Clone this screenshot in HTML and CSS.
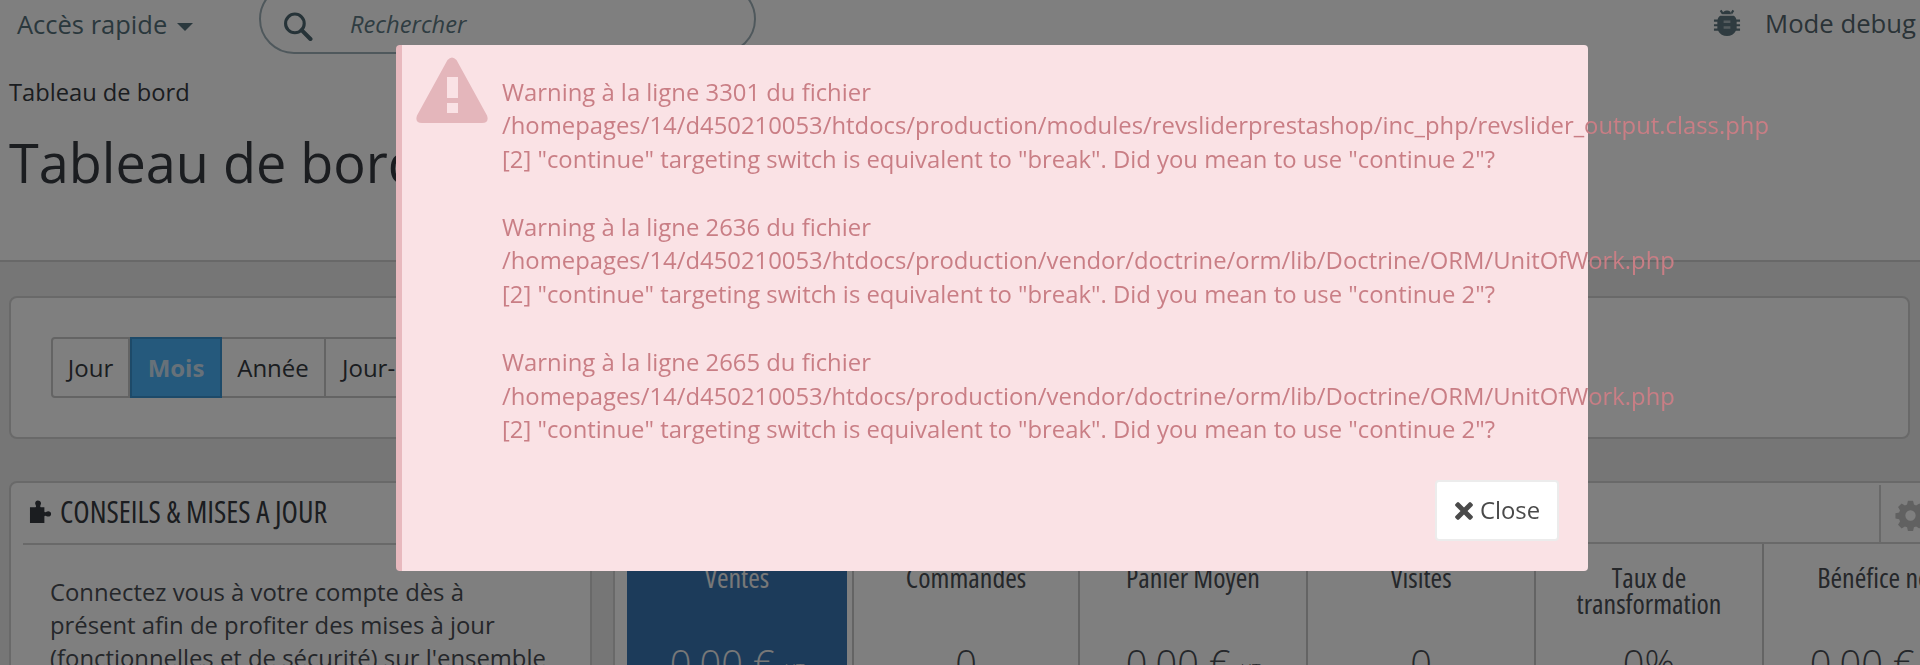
FILE: index.html
```html
<!DOCTYPE html>
<html lang="fr">
<head>
<meta charset="utf-8">
<title>Tableau de bord</title>
<link rel="stylesheet" href="styles.css">
</head>
<body>
<div class="page">
  <header class="head">
    <div class="topbar">
      <a class="quick">Accès rapide <span class="caret"></span></a>
      <div class="search">
        <svg class="search-ico" viewBox="0 0 28 28"><circle cx="11" cy="11" r="9" fill="none" stroke="currentColor" stroke-width="3"/><path d="M17.5 17.5L26 26" stroke="currentColor" stroke-width="4" stroke-linecap="round"/></svg>
        <span class="search-text">Rechercher</span>
      </div>
      <div class="debug">
        <svg class="bug" viewBox="0 0 28 30"><path fill="currentColor" d="M9 6.5C9.5 3.8 11.5 2.5 14 2.5s4.500 1.300 5 4zM6.500 3l1.800-1.200 2.200 3.500-1.800 1.200zM21.500 3l-1.800-1.200-2.200 3.500 1.800 1.200zM7 8h14c1.600 1 2.400 2.500 2.700 4H27.500v2.200H24v2.600h3.500V19H24v2.300h3.500v2.200H23.200C21.500 27 18 29 14 29S6.500 27 4.800 23.500H.5v-2.200H4V19H.5v-2.200H4v-2.600H.5V12h3.800C4.600 10.500 5.400 9 7 8z"/><path fill="#a9b7bc" d="M10.500 13h7v2.500h-7zM10.500 19h7v2.500h-7z"/></svg>
        <span>Mode debug</span>
      </div>
    </div>
    <div class="crumb">Tableau de bord</div>
    <h1 class="title">Tableau de bord</h1>
  </header>
  <main class="content">
    <section class="card range">
      <div class="btn-group">
        <span class="seg seg-jour">Jour</span>
        <span class="seg seg-on">Mois</span>
        <span class="seg seg-annee">Année</span>
        <span class="seg seg-j1">Jour-1</span>
      </div>
    </section>
    <div class="columns">
      <section class="card tips">
        <h2 class="tips-head">
          <svg class="puzzle" viewBox="0 0 26 26"><path fill="currentColor" d="M9 1.500c2.200 0 3.500 1.300 3.500 3 0 1.200-.8 2-.8 3 0 .6.300 1 1 1h3.300v4.200c0 .7.500 1 1 1 1 0 1.600-.9 2.900-.9 1.800 0 3.100 1.100 3.100 2.700s-1.300 2.800-3.100 2.800c-1.300 0-1.900-.9-2.900-.9-.5 0-1 .3-1 1V25H1V8.500h5.300c.7 0 1-.4 1-1 0-1-.9-1.800-.9-3 0-1.700 1.300-3 2.600-3z"/></svg>
          CONSEILS &amp; MISES A JOUR
        </h2>
        <p class="tips-text">Connectez vous à votre compte dès à présent afin de profiter des mises à jour (fonctionnelles et de sécurité) sur l'ensemble</p>
      </section>
      <section class="card stats">
        <div class="stats-bar">
          <div class="gear-cell">
            <svg class="gear" viewBox="-2 -2 36 36"><path fill="currentColor" fill-rule="evenodd" d="M13 -1h6l1 4.300 2.500 1 3.800-2.300 4.200 4.200-2.300 3.800 1 2.500 4.300 1v6l-4.300 1-1 2.500 2.300 3.800-4.200 4.200-3.800-2.300-2.500 1-1 4.300h-6l-1-4.300-2.500-1-3.800 2.300-4.200-4.200 2.300-3.800-1-2.500-4.300-1v-6l4.300-1 1-2.500-2.300-3.800 4.200-4.200 3.800 2.300 2.500-1zM16 10a6 6 0 1 0 0 12 6 6 0 0 0 0-12z"/></svg>
          </div>
        </div>
        <div class="kpis">
          <div class="kpi kpi-on"><div class="kpi-name">Ventes</div><div class="kpi-val">0,00 € <small>HT</small></div></div>
          <div class="kpi"><div class="kpi-name">Commandes</div><div class="kpi-val">0</div></div>
          <div class="kpi"><div class="kpi-name">Panier Moyen</div><div class="kpi-val">0,00 € <small>HT</small></div></div>
          <div class="kpi"><div class="kpi-name">Visites</div><div class="kpi-val">0</div></div>
          <div class="kpi"><div class="kpi-name">Taux de<br>transformation</div><div class="kpi-val">0%</div></div>
          <div class="kpi"><div class="kpi-name">Bénéfice net</div><div class="kpi-val">0,00 € <small>HT</small></div></div>
        </div>
      </section>
    </div>
  </main>
</div>
<div class="overlay"></div>
<div class="modal" role="dialog">
  <svg class="warn" viewBox="0 0 72 66"><path fill="#e4b6bb" fill-rule="evenodd" d="M31.500 3Q36 -2 40.500 3L71 58.500Q73.500 66 66 66H6Q-1.500 66 1 58.500zM31 20v21h11V20zM31 46v10h11V46z"/></svg>
  <div class="msgs">
    <p class="msg">Warning à la ligne 3301 du fichier<br>/homepages/14/d450210053/htdocs/production/modules/revsliderprestashop/inc_php/revslider_output.class.php<br>[2] "continue" targeting switch is equivalent to "break". Did you mean to use "continue 2"?</p>
    <p class="msg">Warning à la ligne 2636 du fichier<br>/homepages/14/d450210053/htdocs/production/vendor/doctrine/orm/lib/Doctrine/ORM/UnitOfWork.php<br>[2] "continue" targeting switch is equivalent to "break". Did you mean to use "continue 2"?</p>
    <p class="msg">Warning à la ligne 2665 du fichier<br>/homepages/14/d450210053/htdocs/production/vendor/doctrine/orm/lib/Doctrine/ORM/UnitOfWork.php<br>[2] "continue" targeting switch is equivalent to "break". Did you mean to use "continue 2"?</p>
  </div>
  <button class="close" type="button">
    <svg class="x" viewBox="0 0 20 20"><path fill="currentColor" d="M5 1.500L10 6.500 15 1.500Q16 .6 17 1.500L18.500 3Q19.400 4 18.500 5L13.500 10 18.500 15Q19.400 16 18.500 17L17 18.500Q16 19.400 15 18.500L10 13.500 5 18.500Q4 19.400 3 18.500L1.500 17Q.6 16 1.500 15L6.500 10 1.500 5Q.6 4 1.500 3L3 1.500Q4 .6 5 1.500z"/></svg>
    Close
  </button>
</div>
</body>
</html>
```
FILE: styles.css
```css
* { box-sizing: border-box; }
html, body { margin: 0; padding: 0; height: 665px; overflow: hidden; }
body { font-family: "Open Sans", "Liberation Sans", sans-serif; color: #363a41; background: #fff; }

.page { height: 665px; overflow: hidden; }

.head { height: 262px; background: #fff; border-bottom: 2px solid #d0d0d0; padding: 0 0 0 9px; }
.topbar { height: 54px; display: flex; align-items: flex-start; color: #5a747e; }
.quick { margin: 8px 0 0 8px; width: 242px; flex: none; font-size: 25.5px; line-height: 32px; color: #55707a; white-space: nowrap; }
.caret { display: inline-block; width: 0; height: 0; margin-left: 3px; vertical-align: 3px; border-left: 8px solid transparent; border-right: 8px solid transparent; border-top: 8px solid #55707a; }
.search { width: 497px; height: 70px; margin-top: -16px; flex: none; border: 2px solid #9fb1b9; border-radius: 36px; display: flex; align-items: flex-start; padding: 26px 0 0 22px; }
.search-ico { width: 30px; height: 29px; color: #4d6670; flex: none; }
.search-text { margin: -3px 0 0 37px; font-style: italic; font-size: 23.7px; line-height: 30px; color: #5f7a85; }
.debug { margin-left: auto; display: flex; align-items: flex-start; padding-top: 8px; gap: 24px; white-space: nowrap; font-size: 25.7px; line-height: 32px; color: #55666e; margin-right: 4px; }
.bug { width: 28px; height: 29px; color: #5f7780; flex: none; }

.crumb { margin-top: 22px; font-size: 23.7px; line-height: 32px; color: #363a41; }
.title { margin: 19px 0 0; font-size: 54px; line-height: 70px; font-weight: 400; color: #363a41; white-space: nowrap; }

.content { background: #ececec; padding: 34px 0 0 9px; height: 403px; }
.card { background: #fff; border: 2px solid #d2d2d2; border-radius: 8px; }
.range { height: 143px; margin-right: 10px; padding: 39px 0 0 40px; }
.btn-group { display: flex; height: 61px; width: 500px; border: 2px solid #c8c8c8; border-radius: 4px; font-size: 24px; }
.seg { display: flex; align-items: center; justify-content: center; border-right: 2px solid #c8c8c8; }
.seg-jour { width: 77px; }
.seg-on { width: 92px; margin: -2px 0; background: #4ab2f8; border: 2px solid #3a94d2; color: #cfe3f2; font-weight: 700; }
.seg-annee { width: 104px; }
.seg-j1 { flex: 1; justify-content: flex-start; padding-left: 16px; border-right: 0; white-space: nowrap; }

.columns { display: flex; gap: 21px; margin-top: 42px; }
.tips { width: 583px; height: 200px; flex: none; padding: 0 20px 0 14px; }
.tips-head { margin: 0 0 0 -2px; height: 62px; padding: 0 0 4px 4px; display: flex; align-items: center; gap: 5px; border-bottom: 2px solid #d2d2d2; font-family: "Open Sans", sans-serif; font-stretch: 75%; font-size: 30px; font-weight: 400; color: #363a41; white-space: nowrap; }
.puzzle { width: 27px; height: 25px; flex: none; margin-left: 1px; }
.tips-text { width: 500px; margin: 31px 0 0 25px; font-size: 23.85px; line-height: 33.2px; color: #4a4e55; }

.stats { flex: 1; min-width: 0; height: 200px; margin-right: -31px; padding: 0 12px; border-right: 0; border-radius: 8px 0 0 0; }
.stats-bar { height: 61px; display: flex; justify-content: flex-end; border-bottom: 2px solid #d2d2d2; margin: 0 -12px; padding-left: 12px; }
.gear-cell { width: 72px; border-left: 2px solid #d2d2d2; margin-top: 2px; padding: 15px 0 0 14px; }
.gear { display: block; width: 31px; height: 31px; color: #c2c2c2; }
.kpis { display: flex; }
.kpi { width: 228px; flex: none; height: 200px; padding-top: 20px; text-align: center; border-right: 2px solid #c8c8c8; font-family: "Open Sans", sans-serif; font-stretch: 75%; color: #4a4e55; }
.kpi-on { width: 220px; margin-right: 5px; background: #3876b4; color: #f0f0f0; border-right: 0; }
.kpi-on + .kpi { border-left: 2px solid #c8c8c8; }
.kpi-name { font-size: 28px; line-height: 26px; height: 52px; }
.kpi-val { margin-top: 22px; font-size: 38px; line-height: 50px; font-weight: 300; font-stretch: 100%; }
.kpi-val small { font-size: 16px; vertical-align: 2px; }

.overlay { position: fixed; inset: 0; background: rgba(0, 0, 0, .5); }
.modal { position: fixed; left: 396px; top: 45px; width: 1192px; height: 526px; background: #fae2e5; border-left: 6px solid #e8b9be; border-radius: 4px; color: #c97e85; font-size: 23.85px; line-height: 33.8px; }
.warn { position: absolute; left: 14px; top: 12px; width: 72px; height: 66px; }
.msgs { padding: 30.5px 0 0 100px; white-space: nowrap; }
.msg { margin: 0 0 33.8px; }
.close { position: absolute; right: 29px; top: 435px; width: 124px; height: 61px; background: #fff; border: 2px solid #ececec; border-radius: 4px; font: inherit; color: #4a4a4a; display: flex; align-items: center; justify-content: center; gap: 6px; padding: 0; }
.x { width: 20px; height: 20px; }
```
